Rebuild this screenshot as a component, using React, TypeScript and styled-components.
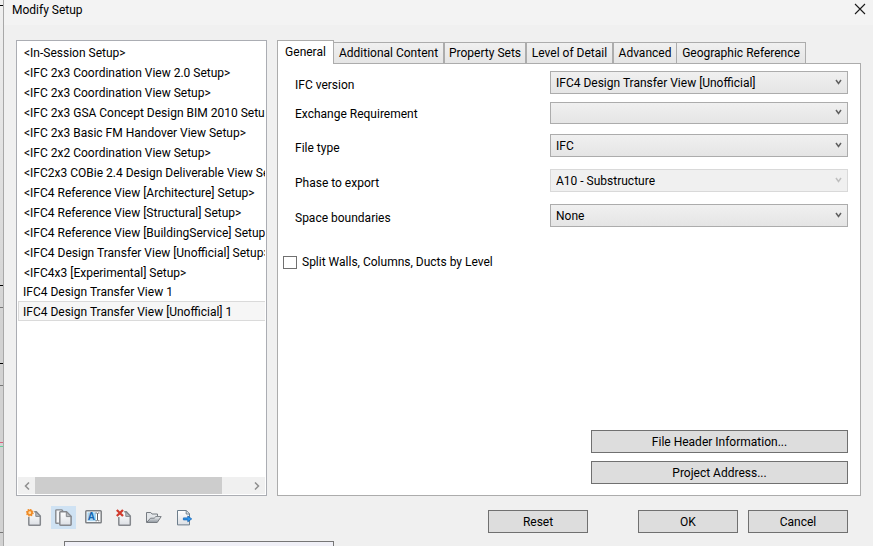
import React, { useState } from "react";
import styled, { createGlobalStyle, css } from "styled-components";

const GlobalStyle = createGlobalStyle`
  *, *::before, *::after { box-sizing: border-box; }
  body {
    margin: 0;
    color: #000;
    font-family: Roboto, "Segoe UI", sans-serif;
    font-size: 12px;
    line-height: 16px;
  }
  button, select, input { font: inherit; color: inherit; margin: 0; }
`;

const Screen = styled.div`
  display: flex;
  height: 100vh;
  min-height: 440px;
  overflow: hidden;
  background: #f0f0f0;
`;

const Backdrop = styled.svg`
  flex: 0 0 4px;
  width: 4px;
  height: 546px;
`;

const Dialog = styled.main`
  flex: 1;
  min-width: 0;
  display: flex;
  flex-direction: column;
`;

const TitleBar = styled.header`
  display: flex;
  justify-content: space-between;
  align-items: flex-start;
  height: 25px;
  padding: 2px 7px 0 8px;
  background: #f3f3f3;
`;

const Title = styled.h1`
  margin: 0;
  font-size: 12px;
  font-weight: 400;
  line-height: 16px;
`;

const CloseButton = styled.button`
  display: flex;
  padding: 1px 0;
  border: 0;
  background: none;
`;

const Body = styled.div`
  flex: 1;
  min-height: 0;
  display: flex;
  gap: 10px;
  padding: 15px 12px 0;
`;

const ListPane = styled.section`
  flex: 0 0 251px;
  min-width: 0;
  display: flex;
  flex-direction: column;
  padding: 0 1px 1px;
  border: 1px solid #abadb3;
  background: #fff;
`;

const SetupList = styled.ul`
  flex: 1;
  min-height: 0;
  margin: 0;
  padding: 0;
  overflow: hidden;
  list-style: none;
`;

const SetupItem = styled.button<{ $builtIn: boolean; $selected: boolean }>`
  display: block;
  width: calc(100% + 4px);
  height: 20px;
  padding: ${(p) => (p.$builtIn ? "2px 0 0 5px" : "1px 0 0 4px")};
  border: 1px solid ${(p) => (p.$selected ? "#dadada" : "transparent")};
  background: ${(p) => (p.$selected ? "#f6f6f6" : "none")};
  line-height: 18px;
  text-align: left;
  white-space: nowrap;
`;

const ScrollBar = styled.div`
  display: flex;
  height: 17px;
  background: #f0f0f0;
`;

const ScrollArrow = styled.button`
  display: flex;
  align-items: center;
  justify-content: center;
  width: 17px;
  padding: 0;
  border: 0;
  background: none;
`;

const ScrollTrack = styled.div`
  flex: 1;
`;

const ScrollThumb = styled.div`
  width: 88%;
  height: 100%;
  background: #cdcdcd;
`;

const TabArea = styled.section`
  flex: 1;
  min-width: 0;
  display: flex;
  flex-direction: column;
`;

const TabStrip = styled.div`
  display: flex;
  align-items: flex-end;
  height: 23px;
`;

const Tab = styled.button<{ $active: boolean; $width: number; $edge: number }>`
  width: ${(p) => p.$width}px;
  height: 21px;
  padding: 0;
  border: 1px solid #acacac;
  border-width: 1px ${(p) => p.$edge}px 0 0;
  background: linear-gradient(#f0f0f0, #e5e5e5);
  line-height: 20px;
  text-align: center;
  white-space: nowrap;
  ${(p) =>
    p.$active &&
    css`
      height: 24px;
      margin-bottom: -1px;
      padding-bottom: 1px;
      border-left-width: 1px;
      background: #fff;
      z-index: 1;
    `}
`;

const Panel = styled.div`
  flex: 1;
  min-height: 0;
  display: flex;
  flex-direction: column;
  padding: 7px 12px 11px 5px;
  border: 1px solid #acacac;
  background: #fff;
`;

const Field = styled.div<{ $height: number; $gap: number }>`
  display: flex;
  justify-content: space-between;
  height: ${(p) => p.$height}px;
  margin-bottom: ${(p) => p.$gap}px;
  padding-left: 12px;
`;

const FieldLabel = styled.label<{ $line: number }>`
  line-height: ${(p) => p.$line}px;
  white-space: nowrap;
`;

const SelectFrame = styled.div`
  flex: 0 0 298px;
  display: grid;
  align-items: center;
`;

const Select = styled.select`
  grid-area: 1 / 1;
  width: 100%;
  height: 100%;
  padding: 0 20px 0 5px;
  border: 1px solid #acacac;
  border-radius: 0;
  background: linear-gradient(#f0f0f0, #e5e5e5);
  appearance: none;
  &:disabled {
    border-color: #d9d9d9;
    background: #f0f0f0;
    color: #000;
    opacity: 1;
  }
`;

const SelectArrow = styled.svg<{ $dim: boolean }>`
  grid-area: 1 / 1;
  justify-self: end;
  width: 7px;
  height: 6px;
  margin: 0 6px 2px 0;
  color: ${(p) => (p.$dim ? "#bfbfbf" : "#606060")};
  pointer-events: none;
`;

const CheckRow = styled.label`
  display: flex;
  align-items: center;
  align-self: flex-start;
  gap: 5px;
  height: 16px;
`;

const CheckBox = styled.input`
  width: 14px;
  height: 13px;
  border: 1px solid #707070;
  background: #fff;
  appearance: none;
  &:checked { background: #707070; }
`;

const PanelActions = styled.div`
  display: flex;
  flex-direction: column;
  align-self: flex-end;
  gap: 8px;
  width: 257px;
  margin-top: auto;
`;

const PushButton = styled.button`
  height: 23px;
  padding: 1px 0 0;
  border: 1px solid #707070;
  background: #ddd;
  line-height: 20px;
  text-align: center;
`;

const Footer = styled.footer`
  display: flex;
  justify-content: space-between;
  height: 45px;
  padding: 10px 25px 0 17px;
`;

const Toolbar = styled.div`
  display: flex;
  gap: 5px;
`;

const ToolButton = styled.button<{ $active: boolean }>`
  display: flex;
  align-items: center;
  justify-content: center;
  width: 25px;
  height: 23px;
  padding: 0;
  border: 0;
  background: ${(p) => (p.$active ? "#cfe2f3" : "none")};
`;

const DialogActions = styled.div`
  display: flex;
  gap: 10px;
  padding-top: 4px;
`;

const ActionButton = styled(PushButton)`
  width: 100px;
`;

const ResetButton = styled(ActionButton)`
  margin-right: 40px;
`;

const LowerWindow = styled.div`
  width: 270px;
  height: 5px;
  margin-left: 60px;
  border: 1px solid #767676;
  border-bottom: 0;
  background: #f0f0f7;
`;

const Gradients = () => (
  <defs>
    <linearGradient id="paper" x1="0" y1="0" x2="0" y2="1">
      <stop offset="0" stopColor="#ffffff" />
      <stop offset="1" stopColor="#dcdfe4" />
    </linearGradient>
    <linearGradient id="folder" x1="0" y1="0" x2="0" y2="1">
      <stop offset="0" stopColor="#f2f4f6" />
      <stop offset="1" stopColor="#8d959d" />
    </linearGradient>
  </defs>
);

const Icon = ({ children }: { children: React.ReactNode }) => (
  <svg width="17" height="17" viewBox="0 0 17 17" fill="none" aria-hidden="true">
    <Gradients />
    {children}
  </svg>
);

const SmallPage = () => (
  <>
    <path d="M3.8 8V16.2H15.3V7L11.3 2.8H8.6V8Z" fill="url(#paper)" />
    <path d="M3.8 8V15.4Q3.8 16.2 4.6 16.2H14.5Q15.3 16.2 15.3 15.4V7L11.3 2.8H9.2" stroke="#85888d" strokeWidth="1.5" />
    <path d="M10.8 2.8V7.4H15.3Z" fill="#b9bcc1" stroke="#85888d" strokeWidth="1" />
  </>
);

const NewIcon = () => (
  <Icon>
    <SmallPage />
    <circle cx="4.8" cy="3.7" r="2.3" fill="#ffd9a0" stroke="#f08a24" strokeWidth="1.7" />
    <circle cx="4.8" cy="3.7" r="3.3" stroke="#f08a24" strokeWidth="1.2" strokeDasharray="1.3 1.29" />
  </Icon>
);

const DuplicateIcon = () => (
  <Icon>
    <path d="M3.8 14.2H1.5Q.8 14.2 .8 13.4V1.6Q.8 .9 1.5 .9H6.8L8 2" fill="#f5f6f8" stroke="#85888d" strokeWidth="1.4" />
    <path d="M5.5 2.8H11.5L16.1 7.4V15.5Q16.1 16.2 15.4 16.2H5.5Q4.8 16.2 4.8 15.5V3.5Q4.8 2.8 5.5 2.8Z" fill="url(#paper)" stroke="#85888d" strokeWidth="1.5" />
    <path d="M11.3 2.8V7.6H16.1Z" fill="#b9bcc1" stroke="#85888d" strokeWidth="1" />
  </Icon>
);

const RenameIcon = () => (
  <Icon>
    <rect x=".8" y="1.8" width="15.4" height="12" rx=".8" fill="#fff" stroke="#7d8084" strokeWidth="1.5" />
    <rect x="2.4" y="3.4" width="8.6" height="8.8" fill="#a9d5f2" />
    <text x="2.7" y="11.2" fill="#1767b0" fontFamily="Liberation Sans, sans-serif" fontSize="10" fontWeight="700">A</text>
    <path d="M10.6 4H11.9M13.1 4H14.4M12.5 4.2V11.6M10.6 11.8H11.9M13.1 11.8H14.4" stroke="#5a5e62" strokeWidth="1" />
  </Icon>
);

const DeleteIcon = () => (
  <Icon>
    <SmallPage />
    <path d="M1.8 1L8 7M8 1L1.8 7" stroke="#d13a2c" strokeWidth="2.3" />
  </Icon>
);

const OpenIcon = () => (
  <Icon>
    <path d="M1.5 13.3V3.5H5.8L7 5H12.5V7" fill="#e3e6e9" stroke="#777c82" strokeWidth="1" />
    <path d="M1.6 13.5L5.5 9.2H9.2L10.8 7.6H16.2L12.2 13.5Z" fill="url(#folder)" stroke="#777c82" strokeWidth="1" />
  </Icon>
);

const ExportIcon = () => (
  <Icon>
    <path d="M2.5 1.5H11.3L14.5 4.8V15.9H2.5Z" fill="url(#paper)" stroke="#6d7e8c" strokeWidth="1" />
    <path d="M11.2 1.5V5H14.5" stroke="#6d7e8c" strokeWidth="1" />
    <path d="M8.4 8.9H12.8V7L16.7 9.9L12.8 12.8V10.9H8.4Z" fill="#2f97ee" stroke="#1766b4" strokeWidth=".8" />
  </Icon>
);

const setups = [
  "<In-Session Setup>",
  "<IFC 2x3 Coordination View 2.0 Setup>",
  "<IFC 2x3 Coordination View Setup>",
  "<IFC 2x3 GSA Concept Design BIM 2010 Setup>",
  "<IFC 2x3 Basic FM Handover View Setup>",
  "<IFC 2x2 Coordination View Setup>",
  "<IFC2x3 COBie 2.4 Design Deliverable View Setup>",
  "<IFC4 Reference View [Architecture] Setup>",
  "<IFC4 Reference View [Structural] Setup>",
  "<IFC4 Reference View [BuildingService] Setup>",
  "<IFC4 Design Transfer View [Unofficial] Setup>",
  "<IFC4x3 [Experimental] Setup>",
  "IFC4 Design Transfer View 1",
  "IFC4 Design Transfer View [Unofficial] 1",
];

const tabs = [
  { name: "General", width: 57, edge: 1 },
  { name: "Additional Content", width: 111, edge: 2 },
  { name: "Property Sets", width: 82, edge: 2 },
  { name: "Level of Detail", width: 87, edge: 2 },
  { name: "Advanced", width: 63, edge: 1 },
  { name: "Geographic Reference", width: 129, edge: 1 },
];

const fields = [
  { id: "version", label: "IFC version", value: "IFC4 Design Transfer View [Unofficial]", height: 23, gap: 8, line: 28 },
  { id: "exchange", label: "Exchange Requirement", value: "", height: 22, gap: 10, line: 24 },
  { id: "filetype", label: "File type", value: "IFC", height: 23, gap: 12, line: 28 },
  { id: "phase", label: "Phase to export", value: "A10 - Substructure", height: 23, gap: 12, line: 28, disabled: true },
  { id: "space", label: "Space boundaries", value: "None", height: 23, gap: 27, line: 28 },
];

const tools = [
  { name: "New setup", Glyph: NewIcon },
  { name: "Duplicate setup", Glyph: DuplicateIcon },
  { name: "Rename setup", Glyph: RenameIcon },
  { name: "Delete setup", Glyph: DeleteIcon },
  { name: "Load setup", Glyph: OpenIcon },
  { name: "Save setup", Glyph: ExportIcon },
];

export default function App() {
  const [selected, setSelected] = useState(setups.length - 1);
  const [tab, setTab] = useState("General");

  return (
    <>
      <GlobalStyle />
      <Screen>
        <Backdrop viewBox="0 0 4 546" aria-hidden="true">
          <defs>
            <linearGradient id="backdrop" x1="0" y1="0" x2="0" y2="1">
              <stop offset="0" stopColor="#f0f0f0" />
              <stop offset="0.6" stopColor="#d2d2d2" />
            </linearGradient>
          </defs>
          <rect width="4" height="546" fill="url(#backdrop)" />
          <path d="M0 5.5H4M0 285.5H4M0 363.5H4" stroke="#000" />
          <path d="M0 307.5H4M0 385.5H4M0 532.5H4" stroke="#777" />
          <path d="M0 442.5H4" stroke="#d9607a" />
          <path d="M0 446.5H4" stroke="#63cf9a" />
          <path d="M3.5 0V546" stroke="#a8a8a8" />
        </Backdrop>
        <Dialog>
          <TitleBar>
            <Title>Modify Setup</Title>
            <CloseButton aria-label="Close">
              <svg width="12" height="12" viewBox="0 0 12 12" aria-hidden="true">
                <path d="M1 1L11 11M11 1L1 11" stroke="#1a1a1a" strokeWidth="1.1" />
              </svg>
            </CloseButton>
          </TitleBar>
          <Body>
            <ListPane>
              <SetupList>
                {setups.map((name, i) => (
                  <li key={name}>
                    <SetupItem $builtIn={name.startsWith("<")} $selected={i === selected} onClick={() => setSelected(i)}>
                      {name}
                    </SetupItem>
                  </li>
                ))}
              </SetupList>
              <ScrollBar>
                <ScrollArrow aria-label="Scroll left">
                  <svg width="6" height="8" viewBox="0 0 6 8" aria-hidden="true">
                    <path d="M5 .5L1.5 4L5 7.5" fill="none" stroke="#8e8e8e" strokeWidth="1.5" />
                  </svg>
                </ScrollArrow>
                <ScrollTrack><ScrollThumb /></ScrollTrack>
                <ScrollArrow aria-label="Scroll right">
                  <svg width="6" height="8" viewBox="0 0 6 8" aria-hidden="true">
                    <path d="M1 .5L4.5 4L1 7.5" fill="none" stroke="#8e8e8e" strokeWidth="1.5" />
                  </svg>
                </ScrollArrow>
              </ScrollBar>
            </ListPane>
            <TabArea>
              <TabStrip role="tablist">
                {tabs.map((t) => (
                  <Tab
                    key={t.name}
                    role="tab"
                    aria-selected={t.name === tab}
                    $active={t.name === tab}
                    $width={t.width}
                    $edge={t.edge}
                    onClick={() => setTab(t.name)}
                  >
                    {t.name}
                  </Tab>
                ))}
              </TabStrip>
              <Panel role="tabpanel">
                {fields.map((f) => (
                  <Field key={f.id} $height={f.height} $gap={f.gap}>
                    <FieldLabel htmlFor={f.id} $line={f.line}>{f.label}</FieldLabel>
                    <SelectFrame>
                      <Select id={f.id} disabled={f.disabled}>
                        <option>{f.value}</option>
                      </Select>
                      <SelectArrow $dim={!!f.disabled} viewBox="0 0 7 6" aria-hidden="true">
                        <path d="M1 1L3.5 4.5L6 1" fill="none" stroke="currentColor" strokeWidth="1.5" />
                      </SelectArrow>
                    </SelectFrame>
                  </Field>
                ))}
                <CheckRow>
                  <CheckBox type="checkbox" />
                  Split Walls, Columns, Ducts by Level
                </CheckRow>
                <PanelActions>
                  <PushButton>File Header Information...</PushButton>
                  <PushButton>Project Address...</PushButton>
                </PanelActions>
              </Panel>
            </TabArea>
          </Body>
          <Footer>
            <Toolbar role="toolbar">
              {tools.map(({ name, Glyph }, i) => (
                <ToolButton key={name} aria-label={name} $active={i === 1}>
                  <Glyph />
                </ToolButton>
              ))}
            </Toolbar>
            <DialogActions>
              <ResetButton>Reset</ResetButton>
              <ActionButton>OK</ActionButton>
              <ActionButton>Cancel</ActionButton>
            </DialogActions>
          </Footer>
          <LowerWindow />
        </Dialog>
      </Screen>
    </>
  );
}
